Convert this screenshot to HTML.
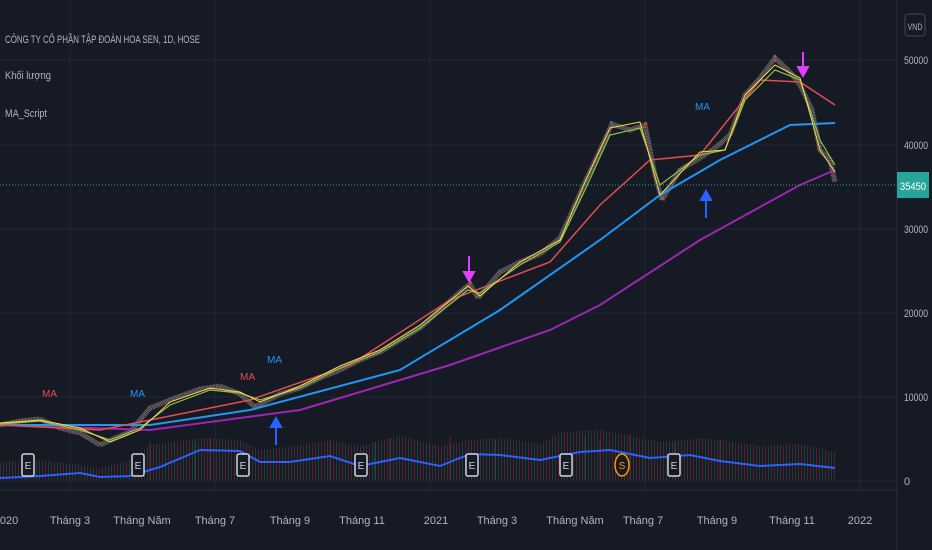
<!DOCTYPE html>
<html><head><meta charset="utf-8"><style>
body{margin:0;background:#161a25;width:932px;height:550px;overflow:hidden;font-family:"Liberation Sans","Noto Sans CJK SC",sans-serif}
svg{display:block}
text{font-family:"Liberation Sans","Noto Sans CJK SC",sans-serif}
</style></head><body>
<svg width="932" height="550" viewBox="0 0 932 550">
<defs>
<pattern id="vb" width="9" height="60" patternUnits="userSpaceOnUse">
<rect x="0" width="1" height="60" fill="#8e3434"/><rect x="3" width="1" height="60" fill="#1d7066"/><rect x="6" width="1" height="60" fill="#8e3434"/>
</pattern>
</defs>
<rect width="932" height="550" fill="#161a25"/>
<g stroke="#232734" stroke-width="1">
<line x1="0" y1="60" x2="897" y2="60"/><line x1="0" y1="145" x2="897" y2="145"/>
<line x1="0" y1="229" x2="897" y2="229"/><line x1="0" y1="313" x2="897" y2="313"/>
<line x1="0" y1="397" x2="897" y2="397"/><line x1="0" y1="481" x2="897" y2="481"/>
<line x1="70" y1="0" x2="70" y2="490"/><line x1="215" y1="0" x2="215" y2="490"/>
<line x1="430" y1="0" x2="430" y2="490"/><line x1="645" y1="0" x2="645" y2="490"/>
<line x1="860" y1="0" x2="860" y2="490"/>
</g>
<line x1="897" y1="0" x2="897" y2="550" stroke="#2a2e39"/>
<line x1="0" y1="490" x2="897" y2="490" stroke="#2a2e39"/>
<!-- volume bars -->
<polygon opacity="0.45" fill="url(#vb)" points="0,480 0,462 40,460 80,465 100,468 130,460 150,445 200,438 240,440 260,450 300,445 330,440 360,446 400,436 440,446 470,440 500,438 540,444 560,432 600,430 630,436 660,442 700,438 720,440 760,446 800,444 835,452 835,480"/>
<g opacity="0.6" stroke-width="1"><path stroke="#8e3434" d="M150 480V442M210 480V438M330 480V442M390 480V438M450 480V436M600 480V440M630 480V434M720 480V440"/><path stroke="#1d7066" d="M195 480V442M375 480V442M495 480V440M585 480V436M675 480V442"/></g>
<polyline fill="none" stroke="#2962ff" stroke-width="2" points="0,478 40,476 80,473 100,477 130,476 160,467 200,450 240,451 260,462 290,462 330,456 360,466 400,458 440,466 470,454 500,455 540,460 580,452 610,450 650,458 690,455 720,461 760,466 800,464 835,468"/>
<!-- candles approximated -->
<polyline fill="none" stroke="#26a69a" stroke-width="5" stroke-dasharray="1 2" opacity="0.8" points="0,425 20,421 40,419 60,428 80,433 100,445 115,438 130,432 150,408 175,398 200,389 220,386 240,394 255,407 280,394 300,388 320,378 340,370 360,360 380,352 400,340 420,328 440,310 460,292 470,284 478,298 500,272 520,262 540,254 560,238 575,205 585,182 600,150 612,124 630,130 645,125 655,175 662,200 680,170 700,158 715,148 730,135 745,95 760,78 775,58 790,72 800,85 812,110 820,150 830,160 835,182"/>
<polyline fill="none" stroke="#ef5350" stroke-width="5" stroke-dasharray="1 2" stroke-dashoffset="1.5" opacity="0.8" points="0,425 20,421 40,419 60,428 80,433 100,445 115,438 130,432 150,408 175,398 200,389 220,386 240,394 255,407 280,394 300,388 320,378 340,370 360,360 380,352 400,340 420,328 440,310 460,292 470,284 478,298 500,272 520,262 540,254 560,238 575,205 585,182 600,150 612,124 630,130 645,125 655,175 662,200 680,170 700,158 715,148 730,135 745,95 760,78 775,58 790,72 800,85 812,110 820,150 830,160 835,182"/>
<!-- MA lines -->
<polyline fill="none" stroke="#9c27b0" stroke-width="2" points="0,425 150,430 300,410 450,365 550,330 600,305 700,240 800,185 835,170"/>
<polyline fill="none" stroke="#2196f3" stroke-width="2" points="0,425 150,425 250,410 400,370 500,310 600,240 660,195 720,160 790,125 835,123"/>
<polyline fill="none" stroke="#e04f4f" stroke-width="1.5" points="0,425 100,430 150,420 250,400 350,365 450,300 550,262 600,205 650,160 700,155 760,80 800,82 835,105"/>
<polyline fill="none" stroke="#8bc34a" stroke-width="1.2" points="0,424 40,421 80,430 110,440 140,428 170,405 210,390 240,393 260,400 300,388 340,368 380,352 420,328 468,290 480,293 520,265 560,242 585,190 610,135 640,128 660,185 700,155 725,150 745,100 775,70 800,80 820,140 835,165"/>
<polyline fill="none" stroke="#ffd54f" stroke-width="1" points="0,423 40,420 80,428 110,442 140,430 170,402 210,388 240,392 260,402 300,386 340,366 380,350 420,325 468,286 480,296 520,262 560,240 585,182 610,128 640,122 660,195 700,152 725,150 745,95 775,65 800,78 820,150 835,172"/>
<!-- signals -->
<text x="42" y="397" fill="#e04f4f" font-size="10">MA</text>
<text x="130" y="397" fill="#2196f3" font-size="10">MA</text>
<text x="240" y="380" fill="#e04f4f" font-size="10">MA</text>
<text x="267" y="363" fill="#2196f3" font-size="10">MA</text>
<text x="695" y="110" fill="#2196f3" font-size="10">MA</text>
<g stroke="#2962ff" stroke-width="2" fill="#2962ff">
<line x1="276" y1="445" x2="276" y2="425"/><path d="M271 427 276 418 281 427Z"/>
<line x1="706" y1="218" x2="706" y2="197"/><path d="M701 200 706 191 711 200Z"/>
</g>
<g stroke="#e040fb" stroke-width="2" fill="#e040fb">
<line x1="469" y1="256" x2="469" y2="275"/><path d="M464 272 469 281 474 272Z"/>
<line x1="803" y1="52" x2="803" y2="70"/><path d="M798 67 803 76 808 67Z"/>
</g>
<!-- price line -->
<line x1="0" y1="185" x2="897" y2="185" stroke="#26a69a" stroke-dasharray="1 2"/>
<rect x="897" y="172" width="32" height="26" fill="#26a69a"/>
<text x="913" y="190" fill="#fff" font-size="11" text-anchor="middle" textLength="26" lengthAdjust="spacingAndGlyphs">35450</text>
<!-- axis -->
<g fill="#b2b5be" font-size="11">
<rect x="905" y="14" width="20" height="22" rx="3" fill="none" stroke="#434651"/>
<text x="915" y="30" text-anchor="middle" font-size="9" textLength="15" lengthAdjust="spacingAndGlyphs">VND</text>
<text x="904" y="64" textLength="24" lengthAdjust="spacingAndGlyphs">50000</text><text x="904" y="149" textLength="24" lengthAdjust="spacingAndGlyphs">40000</text>
<text x="904" y="233" textLength="24" lengthAdjust="spacingAndGlyphs">30000</text><text x="904" y="317" textLength="24" lengthAdjust="spacingAndGlyphs">20000</text>
<text x="904" y="401" textLength="24" lengthAdjust="spacingAndGlyphs">10000</text><text x="904" y="485">0</text>
</g>
<g fill="#b2b5be" font-size="11" text-anchor="middle">
<text x="6" y="524">2020</text><text x="70" y="524">Tháng 3</text><text x="142" y="524">Tháng Năm</text>
<text x="215" y="524">Tháng 7</text><text x="290" y="524">Tháng 9</text><text x="362" y="524">Tháng 11</text>
<text x="436" y="524">2021</text><text x="497" y="524">Tháng 3</text><text x="575" y="524">Tháng Năm</text>
<text x="643" y="524">Tháng 7</text><text x="717" y="524">Tháng 9</text><text x="792" y="524">Tháng 11</text>
<text x="860" y="524">2022</text>
</g>
<!-- E markers -->
<g font-size="10" fill="#d1d4dc" text-anchor="middle">
<g><rect x="22" y="454" width="12" height="22" rx="2" fill="#161a25" stroke="#d1d4dc" stroke-width="1.5"/><text x="28" y="469">E</text></g>
<g><rect x="132" y="454" width="12" height="22" rx="2" fill="#161a25" stroke="#d1d4dc" stroke-width="1.5"/><text x="138" y="469">E</text></g>
<g><rect x="237" y="454" width="12" height="22" rx="2" fill="#161a25" stroke="#d1d4dc" stroke-width="1.5"/><text x="243" y="469">E</text></g>
<g><rect x="355" y="454" width="12" height="22" rx="2" fill="#161a25" stroke="#d1d4dc" stroke-width="1.5"/><text x="361" y="469">E</text></g>
<g><rect x="466" y="454" width="12" height="22" rx="2" fill="#161a25" stroke="#d1d4dc" stroke-width="1.5"/><text x="472" y="469">E</text></g>
<g><rect x="560" y="454" width="12" height="22" rx="2" fill="#161a25" stroke="#d1d4dc" stroke-width="1.5"/><text x="566" y="469">E</text></g>
<g><rect x="668" y="454" width="12" height="22" rx="2" fill="#161a25" stroke="#d1d4dc" stroke-width="1.5"/><text x="674" y="469">E</text></g>
<ellipse cx="622" cy="465" rx="7" ry="11" fill="#161a25" stroke="#ff9800" stroke-width="1.5"/><text x="622" y="469" fill="#ff9800">S</text>
</g>
<g fill="#b2b5be" font-size="11">
<text x="5" y="43" textLength="195" lengthAdjust="spacingAndGlyphs">CÔNG TY CỔ PHẦN TẬP ĐOÀN HOA SEN, 1D, HOSE</text>
<text x="5" y="79" textLength="46" lengthAdjust="spacingAndGlyphs">Khối lượng</text>
<text x="5" y="117" textLength="42" lengthAdjust="spacingAndGlyphs">MA_Script</text>
</g>
</svg>
</body></html>
